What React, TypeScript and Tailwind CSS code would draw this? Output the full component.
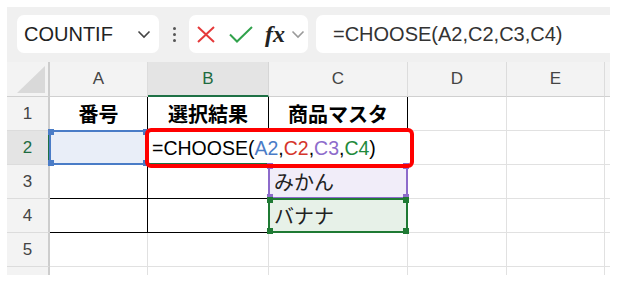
import type { ReactNode } from 'react'

const COLS = [
  { id: 'A', w: 'w-[98px]' },
  { id: 'B', w: 'w-[121px]' },
  { id: 'C', w: 'w-[139px]' },
  { id: 'D', w: 'w-[99px]' },
  { id: 'E', w: 'w-[98px]' },
  { id: 'F', w: 'w-[98px]' }
]

const cellFont = { fontFamily: '"Noto Sans CJK JP", "Noto Sans", sans-serif' }
const latinFont = { fontFamily: '"Liberation Sans", Arial, sans-serif' }

function Corners({ color }: { color: string }) {
  return (
    <>
      <span className={`absolute -left-[3px] -top-[3px] h-[6px] w-[6px] ${color}`} />
      <span className={`absolute -right-[3px] -top-[3px] h-[6px] w-[6px] ${color}`} />
      <span className={`absolute -bottom-[3px] -left-[3px] h-[6px] w-[6px] ${color}`} />
      <span className={`absolute -bottom-[3px] -right-[3px] h-[6px] w-[6px] ${color}`} />
    </>
  )
}

function RowHead({ n, active }: { n?: number; active?: boolean }) {
  return (
    <div
      className={`flex h-full w-[43px] shrink-0 items-center justify-center border-b border-r-2 border-b-[#dcdcdc] text-[17px] ${
        active ? 'border-r-[#1e7145] bg-[#e4e4e4] text-[#1e6b40]' : 'border-r-[#cdcdcd] bg-[#f3f3f3] text-[#444]'
      }`}
      style={latinFont}
    >
      {n}
    </div>
  )
}

function Cell({ w, className = '', children }: { w: string; className?: string; children?: ReactNode }) {
  return (
    <div className={`flex h-full shrink-0 items-center border-b border-r border-[#e1e1e1] ${w} ${className}`} style={cellFont}>
      {children}
    </div>
  )
}

function Range({ border, corner }: { border: string; corner: string }) {
  return (
    <div className={`pointer-events-none absolute -left-px -top-px bottom-0 right-0 border-2 ${border}`}>
      <Corners color={corner} />
    </div>
  )
}

export default function App() {
  return (
    <div className="h-[286px] w-[619px] bg-white pl-[7px] pt-[7px]">
      <div className="flex h-[268px] w-[603px] flex-col overflow-hidden bg-[#f0f0f0]">
        {/* formula bar */}
        <div className="flex h-[55px] shrink-0 items-start pl-[10px] pt-[8px]">
          <div className="flex h-[38px] w-[142px] items-center justify-between rounded-[7px] bg-white pl-[7px] pr-[8px]">
            <span className="text-[20px] text-[#222]" style={latinFont}>
              COUNTIF
            </span>
            <svg width="14" height="9" viewBox="0 0 14 9" fill="none">
              <path d="M1.5 1.5 7 7l5.5-5.5" stroke="#444" strokeWidth="1.6" />
            </svg>
          </div>
          <div className="flex h-[38px] w-[30px] flex-col items-center justify-center gap-[3px]">
            <span className="h-[3px] w-[3px] rounded-full bg-[#555]" />
            <span className="h-[3px] w-[3px] rounded-full bg-[#555]" />
            <span className="h-[3px] w-[3px] rounded-full bg-[#555]" />
          </div>
          <div className="flex h-[38px] w-[119px] items-center rounded-[7px] bg-white pl-[8px]">
            <svg width="18" height="17" viewBox="0 0 18 17" fill="none">
              <path d="M1 1l16 15M17 1 1 16" stroke="#e5393a" strokeWidth="2" />
            </svg>
            <svg width="24" height="17" viewBox="0 0 24 17" fill="none" className="ml-[14px]">
              <path d="M1 8.5 8 15.5 23 1" stroke="#31a24c" strokeWidth="2" />
            </svg>
            <span
              className="ml-[12px] text-[24px] font-semibold italic leading-none text-[#222]"
              style={{ fontFamily: '"Liberation Serif", "Times New Roman", serif' }}
            >
              fx
            </span>
            <svg width="14" height="9" viewBox="0 0 14 9" fill="none" className="ml-[6px]">
              <path d="M1.5 1.5 7 7l5.5-5.5" stroke="#9a9a9a" strokeWidth="1.6" />
            </svg>
          </div>
          <div className="ml-[8px] flex h-[38px] flex-1 items-center rounded-l-[7px] bg-white pl-[17px]">
            <span className="text-[20px] text-[#333]" style={latinFont}>
              =CHOOSE(A2,C2,C3,C4)
            </span>
          </div>
        </div>

        {/* column headers */}
        <div className="flex h-[35px] shrink-0">
          <div className="relative h-full w-[43px] shrink-0 border-b border-r-2 border-b-[#d0d0d0] border-r-[#cdcdcd] bg-[#f3f3f3]">
            <svg className="absolute bottom-[3px] right-[3px]" width="28" height="27" viewBox="0 0 28 27">
              <path d="M28 0v27H0z" fill="#d9d9d9" />
            </svg>
          </div>
          {COLS.map((c) => (
            <div
              key={c.id}
              className={`flex h-full shrink-0 items-center justify-center border-r text-[17px] ${c.w} ${
                c.id === 'B'
                  ? 'border-b-2 border-b-[#1e7145] border-r-[#d6d6d6] bg-[#e4e4e4] text-[#1e6b40]'
                  : 'border-b border-b-[#d0d0d0] border-r-[#dcdcdc] bg-[#f3f3f3] text-[#444]'
              }`}
              style={latinFont}
            >
              {c.id === 'F' ? '' : c.id}
            </div>
          ))}
        </div>

        {/* rows */}
        <div className="flex flex-col bg-white">
          <div className="flex h-[34px]">
            <RowHead n={1} />
            <Cell w="w-[98px]" className="justify-center border-b-black border-r-black text-[20px] font-bold text-black">
              番号
            </Cell>
            <Cell w="w-[121px]" className="justify-center border-b-black border-r-black text-[20px] font-bold text-black">
              選択結果
            </Cell>
            <Cell w="w-[139px]" className="justify-center border-b-black border-r-black text-[20px] font-bold text-black">
              商品マスタ
            </Cell>
            <Cell w="w-[99px]" />
            <Cell w="w-[98px]" />
            <Cell w="w-[98px]" />
          </div>

          <div className="flex h-[34px]">
            <RowHead n={2} active />
            <div className="relative h-full w-[98px] shrink-0 bg-[#e9eef8]">
              <Range border="border-[#4a7cc7]" corner="bg-[#4a7cc7]" />
            </div>
            <div className="relative h-full w-[121px] shrink-0 border-b-2 border-[#1e7145]">
              <span
                className="relative z-10 block whitespace-nowrap pl-[4px] pt-[1px] text-[19.5px] leading-[32px] text-black"
                style={latinFont}
              >
                =CHOOSE(<span className="text-[#4a7cc7]">A2</span>,<span className="text-[#d5352c]">C2</span>,
                <span className="text-[#8d6bcb]">C3</span>,<span className="text-[#1f8a3c]">C4</span>)
              </span>
              <div className="pointer-events-none absolute -left-[3px] -top-[3px] z-20 h-[40px] w-[269px] rounded-[6px] border-4 border-[#ff0000]" />
            </div>
            <div className="h-full w-[139px] shrink-0 bg-white" />
            <Cell w="w-[99px]" />
            <Cell w="w-[98px]" />
            <Cell w="w-[98px]" />
          </div>

          <div className="flex h-[34px]">
            <RowHead n={3} />
            <Cell w="w-[98px]" className="border-b-black border-r-black" />
            <Cell w="w-[121px]" className="border-b-black border-r-transparent" />
            <div className="relative flex h-full w-[139px] shrink-0 items-center bg-[#f1edf9] pl-[5px]" style={cellFont}>
              <Range border="border-[#8d6bcb]" corner="bg-[#8d6bcb]" />
              <span className="text-[20px] text-[#222]">みかん</span>
            </div>
            <Cell w="w-[99px]" />
            <Cell w="w-[98px]" />
            <Cell w="w-[98px]" />
          </div>

          <div className="flex h-[34px]">
            <RowHead n={4} />
            <Cell w="w-[98px]" className="border-b-black border-r-black" />
            <Cell w="w-[121px]" className="border-b-black border-r-transparent" />
            <div className="relative flex h-full w-[139px] shrink-0 items-center bg-[#e7f1e8] pl-[5px]" style={cellFont}>
              <Range border="border-[#1f7a34]" corner="bg-[#1f7a34]" />
              <span className="text-[20px] text-[#222]">バナナ</span>
            </div>
            <Cell w="w-[99px]" />
            <Cell w="w-[98px]" />
            <Cell w="w-[98px]" />
          </div>

          <div className="flex h-[34px]">
            <RowHead n={5} />
            {COLS.map((c) => (
              <Cell key={c.id} w={c.w} />
            ))}
          </div>
          <div className="flex h-[34px]">
            <RowHead />
            {COLS.map((c) => (
              <Cell key={c.id} w={c.w} />
            ))}
          </div>
        </div>
      </div>
    </div>
  )
}
